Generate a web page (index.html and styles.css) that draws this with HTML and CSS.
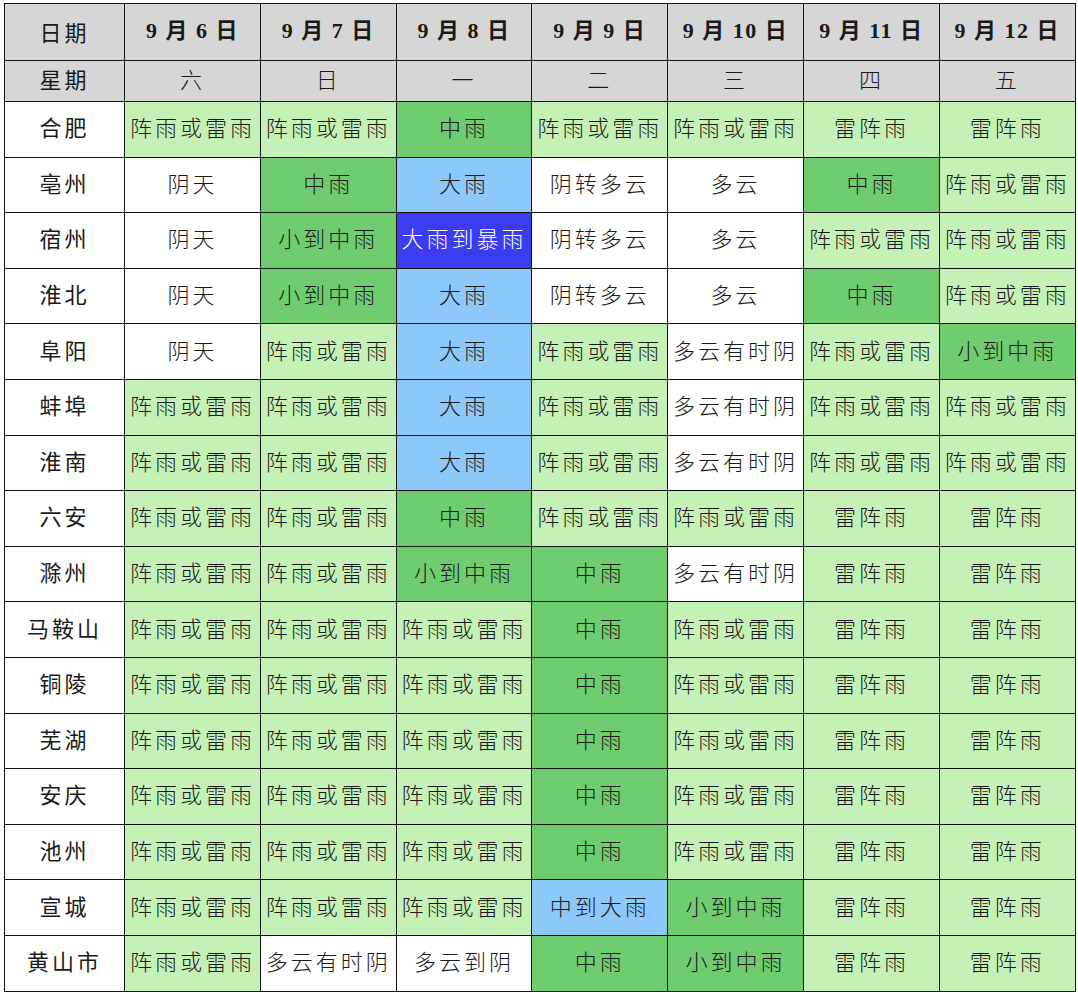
FILE: index.html
```html
<!DOCTYPE html>
<html lang="zh-CN">
<head>
<meta charset="utf-8">
<title>安徽天气预报</title>
<link rel="stylesheet" href="styles.css">
</head>
<body>
<table class="wx">
<colgroup><col class="c0"><col class="cd"><col class="cd"><col class="cd"><col class="cd"><col class="cd"><col class="cd"><col class="cd"></colgroup>
<tr class="h1"><th>日期</th><th>9 月 6 日</th><th>9 月 7 日</th><th>9 月 8 日</th><th>9 月 9 日</th><th>9 月 10 日</th><th>9 月 11 日</th><th>9 月 12 日</th></tr>
<tr class="h2"><th>星期</th><td>六</td><td>日</td><td>一</td><td>二</td><td>三</td><td>四</td><td>五</td></tr>
<tr><th>合肥</th><td class="l">阵雨或雷雨</td><td class="l">阵雨或雷雨</td><td class="m">中雨</td><td class="l">阵雨或雷雨</td><td class="l">阵雨或雷雨</td><td class="l">雷阵雨</td><td class="l">雷阵雨</td></tr>
<tr><th>亳州</th><td>阴天</td><td class="m">中雨</td><td class="b">大雨</td><td>阴转多云</td><td>多云</td><td class="m">中雨</td><td class="l">阵雨或雷雨</td></tr>
<tr><th>宿州</th><td>阴天</td><td class="m">小到中雨</td><td class="d">大雨到暴雨</td><td>阴转多云</td><td>多云</td><td class="l">阵雨或雷雨</td><td class="l">阵雨或雷雨</td></tr>
<tr><th>淮北</th><td>阴天</td><td class="m">小到中雨</td><td class="b">大雨</td><td>阴转多云</td><td>多云</td><td class="m">中雨</td><td class="l">阵雨或雷雨</td></tr>
<tr><th>阜阳</th><td>阴天</td><td class="l">阵雨或雷雨</td><td class="b">大雨</td><td class="l">阵雨或雷雨</td><td>多云有时阴</td><td class="l">阵雨或雷雨</td><td class="m">小到中雨</td></tr>
<tr><th>蚌埠</th><td class="l">阵雨或雷雨</td><td class="l">阵雨或雷雨</td><td class="b">大雨</td><td class="l">阵雨或雷雨</td><td>多云有时阴</td><td class="l">阵雨或雷雨</td><td class="l">阵雨或雷雨</td></tr>
<tr><th>淮南</th><td class="l">阵雨或雷雨</td><td class="l">阵雨或雷雨</td><td class="b">大雨</td><td class="l">阵雨或雷雨</td><td>多云有时阴</td><td class="l">阵雨或雷雨</td><td class="l">阵雨或雷雨</td></tr>
<tr><th>六安</th><td class="l">阵雨或雷雨</td><td class="l">阵雨或雷雨</td><td class="m">中雨</td><td class="l">阵雨或雷雨</td><td class="l">阵雨或雷雨</td><td class="l">雷阵雨</td><td class="l">雷阵雨</td></tr>
<tr><th>滁州</th><td class="l">阵雨或雷雨</td><td class="l">阵雨或雷雨</td><td class="m">小到中雨</td><td class="m">中雨</td><td>多云有时阴</td><td class="l">雷阵雨</td><td class="l">雷阵雨</td></tr>
<tr><th>马鞍山</th><td class="l">阵雨或雷雨</td><td class="l">阵雨或雷雨</td><td class="l">阵雨或雷雨</td><td class="m">中雨</td><td class="l">阵雨或雷雨</td><td class="l">雷阵雨</td><td class="l">雷阵雨</td></tr>
<tr><th>铜陵</th><td class="l">阵雨或雷雨</td><td class="l">阵雨或雷雨</td><td class="l">阵雨或雷雨</td><td class="m">中雨</td><td class="l">阵雨或雷雨</td><td class="l">雷阵雨</td><td class="l">雷阵雨</td></tr>
<tr><th>芜湖</th><td class="l">阵雨或雷雨</td><td class="l">阵雨或雷雨</td><td class="l">阵雨或雷雨</td><td class="m">中雨</td><td class="l">阵雨或雷雨</td><td class="l">雷阵雨</td><td class="l">雷阵雨</td></tr>
<tr><th>安庆</th><td class="l">阵雨或雷雨</td><td class="l">阵雨或雷雨</td><td class="l">阵雨或雷雨</td><td class="m">中雨</td><td class="l">阵雨或雷雨</td><td class="l">雷阵雨</td><td class="l">雷阵雨</td></tr>
<tr><th>池州</th><td class="l">阵雨或雷雨</td><td class="l">阵雨或雷雨</td><td class="l">阵雨或雷雨</td><td class="m">中雨</td><td class="l">阵雨或雷雨</td><td class="l">雷阵雨</td><td class="l">雷阵雨</td></tr>
<tr><th>宣城</th><td class="l">阵雨或雷雨</td><td class="l">阵雨或雷雨</td><td class="l">阵雨或雷雨</td><td class="b">中到大雨</td><td class="m">小到中雨</td><td class="l">雷阵雨</td><td class="l">雷阵雨</td></tr>
<tr><th>黄山市</th><td class="l">阵雨或雷雨</td><td>多云有时阴</td><td>多云到阴</td><td class="m">中雨</td><td class="m">小到中雨</td><td class="l">雷阵雨</td><td class="l">雷阵雨</td></tr>
</table>
</body>
</html>
```
FILE: styles.css
```css
html, body {
  margin: 0;
  padding: 0;
  background: #ffffff;
}
body {
  padding: 3px 0 0 4px;
}
.wx {
  border-collapse: collapse;
  table-layout: fixed;
  width: 1071px;
  font-family: "Noto Sans CJK SC", sans-serif;
  color: #1a1a1a;
}
.wx .c0 { width: 120px; }
.wx .cd { width: 135.8px; }
.wx th, .wx td {
  border: 1px solid #111;
  text-align: center;
  vertical-align: middle;
  padding: 0 0 6px 0;
  font-size: 22px;
  letter-spacing: 3px;
  white-space: nowrap;
  overflow: hidden;
}
.wx td {
  font-weight: 300;
  height: 48.6px;
  line-height: 1;
}
.wx th {
  font-weight: 400;
  background: #fff;
  height: 48.6px;
  line-height: 1;
}
.wx tr.h1 th {
  background: #d6d6d6;
  height: 53px;
  padding-bottom: 3px;
  font-family: "Liberation Serif", "Noto Sans CJK SC", serif;
  font-weight: 700;
  letter-spacing: 1.5px;
  font-size: 22px;
}
.wx tr.h1 th:first-child {
  font-family: "Noto Sans CJK SC", sans-serif;
  font-weight: 400;
  letter-spacing: 3px;
}
.wx tr.h2 th, .wx tr.h2 td {
  background: #d6d6d6;
  height: 34px;
}
.wx tr.h2 td {
  font-weight: 300;
}
.wx .l { background: #c6f1b6; }
.wx .m { background: #6fcd6f; }
.wx .b { background: #8dc8fb; }
.wx .d { background: #3b3bf0; color: #ffffff; }
```
